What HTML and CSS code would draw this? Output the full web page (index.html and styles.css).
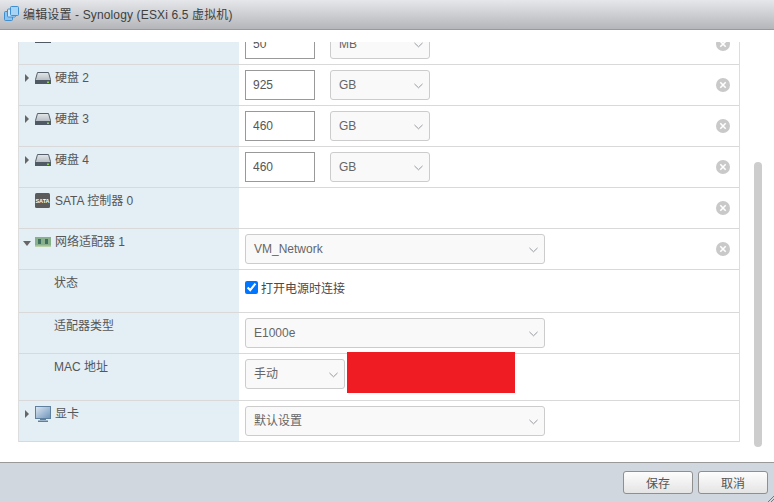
FILE: index.html
```html
<!DOCTYPE html>
<html lang="zh">
<head>
<meta charset="utf-8">
<title>编辑设置</title>
<link rel="stylesheet" href="styles.css">
</head>
<body>
<svg class="defs" width="0" height="0" aria-hidden="true">
  <defs>
    <linearGradient id="diskTop" x1="0" y1="0" x2="0" y2="1"><stop offset="0" stop-color="#e4e8eb"/><stop offset="1" stop-color="#a2abb2"/></linearGradient>
    <linearGradient id="screen" x1="0" y1="0" x2="1" y2="1"><stop offset="0" stop-color="#dfe9f2"/><stop offset="1" stop-color="#6d93bb"/></linearGradient>
    <symbol id="disk" viewBox="0 0 16 12"><path d="M2.500.5h11L15.500 7.500v4H.5v-4z" fill="url(#diskTop)" stroke="#56616b"/><rect x="0" y="8" width="16" height="4" fill="#4f5a64"/><rect x="12" y="9.500" width="2" height="1.500" fill="#8fd14f"/></symbol>
    <symbol id="x" viewBox="0 0 14 14"><circle cx="7" cy="7" r="7" fill="#c9c9c9"/><path d="M4.300 4.300l5.400 5.400M9.700 4.300l-5.400 5.400" stroke="#fff" stroke-width="1.600"/></symbol>
    <symbol id="chev" viewBox="0 0 10 6"><path d="M.5.700L5 5l4.500-4.300" fill="none" stroke="#8a8f94" stroke-width="1"/></symbol>
  </defs>
</svg>
<div class="dialog">
  <header class="titlebar">
    <svg class="vm-icon" viewBox="0 0 15 15" width="15" height="15"><rect x=".5" y="5.500" width="8" height="9" rx="1" fill="#8cc4ef" stroke="#3f8fd0"/><rect x="3.500" y="3" width="8" height="8" rx="1" fill="#cfe6f8" stroke="#3f8fd0"/><rect x="6.500" y=".5" width="8" height="9" rx="1" fill="#a9d3f3" stroke="#3f8fd0"/></svg>
    <span class="title">编辑设置 - Synology (ESXi 6.5 虚拟机)</span>
  </header>
  <main class="body">
    <div class="viewport">
      <div class="table">
        <div class="row">
          <div class="label"><span class="arrow"></span><svg class="icon"><use href="#disk"/></svg><span>硬盘 1</span></div>
          <div class="value"><input class="num" value="50"><div class="select sm"><span>MB</span><svg class="chev"><use href="#chev"/></svg></div><svg class="remove"><use href="#x"/></svg></div>
        </div>
        <div class="row">
          <div class="label"><span class="arrow"></span><svg class="icon"><use href="#disk"/></svg><span>硬盘 2</span></div>
          <div class="value"><input class="num" value="925"><div class="select sm"><span>GB</span><svg class="chev"><use href="#chev"/></svg></div><svg class="remove"><use href="#x"/></svg></div>
        </div>
        <div class="row">
          <div class="label"><span class="arrow"></span><svg class="icon"><use href="#disk"/></svg><span>硬盘 3</span></div>
          <div class="value"><input class="num" value="460"><div class="select sm"><span>GB</span><svg class="chev"><use href="#chev"/></svg></div><svg class="remove"><use href="#x"/></svg></div>
        </div>
        <div class="row">
          <div class="label"><span class="arrow"></span><svg class="icon"><use href="#disk"/></svg><span>硬盘 4</span></div>
          <div class="value"><input class="num" value="460"><div class="select sm"><span>GB</span><svg class="chev"><use href="#chev"/></svg></div><svg class="remove"><use href="#x"/></svg></div>
        </div>
        <div class="row">
          <div class="label"><span class="arrow none"></span><svg class="icon sata" viewBox="0 0 15 15"><rect width="15" height="15" rx="1.500" fill="#5b5b5b"/><text x="7.500" y="10" class="sata-text">SATA</text></svg><span>SATA 控制器 0</span></div>
          <div class="value"><svg class="remove"><use href="#x"/></svg></div>
        </div>
        <div class="row">
          <div class="label"><span class="arrow open"></span><svg class="icon" viewBox="0 0 16 10"><rect width="16" height="10" fill="#88b08c"/><rect x="3" y="2" width="3" height="5" fill="#3f6f60"/><rect x="10" y="2" width="3" height="5" fill="#3f6f60"/><rect y="8.500" width="16" height="1.500" fill="#b9d0a8"/></svg><span>网络适配器 1</span></div>
          <div class="value"><div class="select lg"><span>VM_Network</span><svg class="chev"><use href="#chev"/></svg></div><svg class="remove"><use href="#x"/></svg></div>
        </div>
        <div class="row status">
          <div class="label sub"><span>状态</span></div>
          <div class="value check"><label class="connect"><input type="checkbox" checked><span>打开电源时连接</span></label></div>
        </div>
        <div class="row">
          <div class="label sub"><span>适配器类型</span></div>
          <div class="value"><div class="select lg"><span>E1000e</span><svg class="chev"><use href="#chev"/></svg></div></div>
        </div>
        <div class="row mac">
          <div class="label sub"><span>MAC 地址</span></div>
          <div class="value"><div class="select md cjk"><span>手动</span><svg class="chev"><use href="#chev"/></svg></div><div class="redact"></div></div>
        </div>
        <div class="row">
          <div class="label"><span class="arrow"></span><svg class="icon" viewBox="0 0 16 16"><rect x=".5" y=".5" width="15" height="12" fill="url(#screen)" stroke="#5f7f9f"/><rect x="5" y="13" width="6" height="1" fill="#5f7f9f"/><rect x="3" y="14.500" width="10" height="1.500" fill="#5f7f9f"/></svg><span>显卡</span></div>
          <div class="value"><div class="select lg cjk"><span>默认设置</span><svg class="chev"><use href="#chev"/></svg></div></div>
        </div>
      </div>
    </div>
    <div class="track"><div class="thumb"></div></div>
  </main>
  <footer class="footer">
    <button class="btn">保存</button>
    <button class="btn">取消</button>
    <svg class="grip" viewBox="0 0 6 6" width="6" height="6"><path d="M0 6L6 0M3 6l3-3" stroke="#777" stroke-width="1"/></svg>
  </footer>
</div>
</body>
</html>
```
FILE: styles.css
```css
* { box-sizing: border-box; }
html, body { margin: 0; height: 100%; }
body {
  width: 774px;
  height: 502px;
  overflow: hidden;
  background: #fff;
  font-family: "Liberation Sans", "Noto Sans CJK SC", sans-serif;
  font-size: 12px;
  color: #565656;
}
.defs { position: absolute; }
.dialog { display: flex; flex-direction: column; height: 502px; }

.titlebar {
  height: 30px;
  display: flex;
  align-items: center;
  gap: 4px;
  padding: 0 4px 3px;
  background: linear-gradient(#e6e7eb, #b4b6b9);
  border-bottom: 1px solid #999;
  flex: none;
}
.vm-icon { flex: none; }
.title { font-size: 12px; color: #3f3f3f; letter-spacing: .14px; }

.body {
  flex: 1;
  display: flex;
  min-height: 0;
  padding-top: 12px;
}
.viewport {
  width: 722px;
  margin-left: 18px;
  height: 400px;
  overflow: hidden;
}
.table {
  margin-top: -18px;
  border-left: 1px solid #ddd;
  border-right: 1px solid #ddd;
}
.row {
  display: grid;
  grid-template-columns: 220px 1fr;
  height: 41px;
  border-bottom: 1px solid #d9d9d9;
}
.row.status { height: 43px; }
.row.mac { height: 47px; }
.label {
  background: #e3eef5;
  display: flex;
  align-items: flex-start;
  padding: 5px 0 0 6px;
  line-height: 17px;
  height: 100%;
}
.label.sub { padding-left: 35px; }
.arrow {
  width: 0;
  height: 0;
  margin: 4px 6px 0 0;
  border-left: 4px solid #666;
  border-top: 4px solid transparent;
  border-bottom: 4px solid transparent;
  flex: none;
}
.arrow.none { border-color: transparent; }
.arrow.open {
  margin: 7px 4px 0 -2px;
  border-left: 4px solid transparent;
  border-right: 4px solid transparent;
  border-top: 5px solid #666;
  border-bottom: 0;
}
.icon { width: 16px; height: 16px; margin-right: 4px; flex: none; }
.icon.sata { width: 15px; height: 15px; margin-right: 5px; }
.sata-text { font-size: 5.500px; font-weight: bold; fill: #fff; text-anchor: middle; }

.value {
  position: relative;
  display: flex;
  align-items: flex-start;
  padding: 5px 0 0 6px;
  gap: 15px;
}
.value.check { padding-top: 9px; }
.num {
  width: 70px;
  height: 30px;
  border: 1px solid #999;
  border-radius: 0;
  padding: 0 7px;
  font: inherit;
  color: #565656;
  background: #fff;
  outline: none;
}
.select {
  height: 30px;
  display: flex;
  align-items: center;
  justify-content: space-between;
  padding: 0 6px 0 8px;
  background: #f9f9f9;
  border: 1px solid #ccc;
  border-radius: 3px;
  color: #666;
  flex: none;
}
.select.sm { width: 100px; }
.select.md { width: 100px; }
.select.lg { width: 300px; }
.select.cjk > span { margin-top: -3px; }
.chev { width: 9px; height: 6px; margin-top: 2px; }
.remove {
  position: absolute;
  right: 9px;
  top: 13px;
  width: 14px;
  height: 14px;
}
.connect { display: flex; align-items: center; gap: 3px; color: #4a4a4a; }
.connect input { margin: 0; width: 13px; height: 13px; }
.redact {
  width: 168px;
  height: 41px;
  margin: -7px 0 0 -13px;
  background: #f01c24;
}

.track { flex: 1; position: relative; }
.thumb {
  position: absolute;
  left: 14px;
  top: 120px;
  width: 8px;
  height: 285px;
  background: #cdcdcd;
  border-radius: 4px;
}

.footer {
  position: relative;
  height: 40px;
  flex: none;
  display: flex;
  justify-content: flex-end;
  align-items: flex-start;
  gap: 5px;
  padding: 8px 6px 0 0;
  background: #d0d7df;
  border-top: 1px solid #999;
}
.btn {
  width: 70px;
  height: 23px;
  padding: 0;
  border: 1px solid #8f8f8f;
  border-radius: 3px;
  background: linear-gradient(#fdfdfd, #e4e4e4);
  font: inherit;
  color: #555;
}
.grip { position: absolute; right: 0; bottom: 0; }
```
